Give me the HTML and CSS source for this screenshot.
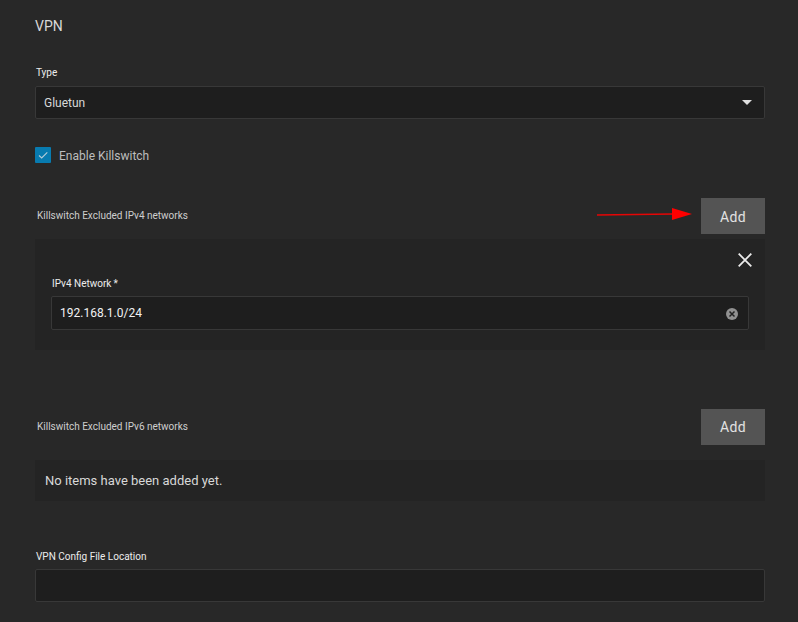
FILE: index.html
```html
<!DOCTYPE html>
<html lang="en">
<head>
<meta charset="utf-8">
<title>VPN</title>
<link rel="stylesheet" href="styles.css">
</head>
<body>
<main class="form">
  <h1 class="title">VPN</h1>
  <div class="label type-label">Type</div>
  <div class="field select">
    <span class="value">Gluetun</span>
    <svg class="caret" width="10" height="5" viewBox="0 0 10 5"><path d="M0 0h10L5 5z" fill="#e0e0e0"/></svg>
  </div>
  <div class="check-row">
    <span class="checkbox"><svg width="16" height="16" viewBox="0 0 16 16"><path d="M4 8.5l2.7 2.5L12.3 5.3" fill="none" stroke="#b4ccd8" stroke-width="1.1"/></svg></span>
    <span class="check-text">Enable Killswitch</span>
  </div>
  <section class="list-head first">
    <span class="list-label">Killswitch Excluded IPv4 networks</span>
    <svg class="arrow" width="96" height="14" viewBox="0 0 96 14"><path d="M0 8L76 7" stroke="#e60505" stroke-width="1.3"/><path d="M75 1l20 6-20 6z" fill="#f00"/></svg>
    <div class="add">Add</div>
  </section>
  <section class="panel">
    <div class="close-row"><svg width="14" height="14" viewBox="0 0 14 14"><path d="M.7.7l12.6 12.6M13.3.7L.7 13.3" stroke="#ececec" stroke-width="1.8"/></svg></div>
    <div class="label net-label">IPv4 Network<span class="star">*</span></div>
    <div class="field net">
      <span class="value bright">192.168.1.0/24</span>
      <svg class="clear" width="12" height="12" viewBox="0 0 12 12"><circle cx="6" cy="6" r="6" fill="#919191"/><path d="M3.5 3.5l5 5M8.5 3.5l-5 5" stroke="#222" stroke-width="1.5"/></svg>
    </div>
  </section>
  <section class="list-head second">
    <span class="list-label">Killswitch Excluded IPv6 networks</span>
    <div class="add">Add</div>
  </section>
  <section class="empty">No items have been added yet.</section>
  <div class="label config-label">VPN Config File Location</div>
  <div class="field"></div>
</main>
</body>
</html>
```
FILE: styles.css
```css
* { box-sizing: border-box; }
body {
  margin: 0;
  height: 622px;
  overflow: hidden;
  background: #282828;
  color: #d8d8d8;
  font-family: Roboto, "Liberation Sans", sans-serif;
}
.form { padding: 16px 33px 0 35px; }
svg { display: block; flex: none; }
.title {
  margin: 0;
  font-size: 14px;
  line-height: 20px;
  font-weight: 400;
}
.label {
  padding-left: 1px;
  font-size: 10px;
  line-height: 14px;
  color: #ececec;
}
.type-label { margin: 30px 0 6px; }
.field {
  display: flex;
  align-items: center;
  justify-content: space-between;
  height: 33px;
  padding: 0 8px;
  background: #1e1e1e;
  border: 1px solid #383838;
  border-radius: 2px;
}
.value { font-size: 12px; line-height: 16px; }
.bright { color: #f2f2f2; }
.caret { margin: 0 4px 0 0; }
.check-row {
  display: flex;
  align-items: center;
  gap: 8px;
  height: 16px;
  margin-top: 28px;
}
.checkbox { background: #087bb0; border-radius: 1px; }
.check-text { padding-top: 2px; font-size: 12px; line-height: 16px; color: #bdbdbd; }
.list-head {
  display: flex;
  align-items: center;
  height: 36px;
  padding-left: 2px;
}
.first { margin-top: 35px; }
.first .add { line-height: 38px; }
.second { margin-top: 59px; }
.list-label { flex: 1; font-size: 10px; line-height: 14px; color: #cecece; }
.arrow { margin: -4px 8px 0 0; }
.add {
  width: 64px;
  height: 36px;
  background: #545454;
  color: #e2e2e2;
  font-size: 14px;
  line-height: 37px;
  letter-spacing: .4px;
  text-align: center;
}
.panel {
  height: 111px;
  margin-top: 5px;
  padding: 14px 16px 0;
  background: #242424;
}
.close-row { display: flex; justify-content: flex-end; margin-right: -3px; }
.net-label { margin: 10px 0 5px; }
.star { margin-left: 2px; }
.net { height: 34px; }
.clear { margin: 1px 2px 0 0; }
.empty {
  height: 41px;
  margin-top: 15px;
  padding-left: 10px;
  background: #242424;
  font-size: 13px;
  line-height: 41px;
}
.config-label { margin: 49px 0 5px; }
```
